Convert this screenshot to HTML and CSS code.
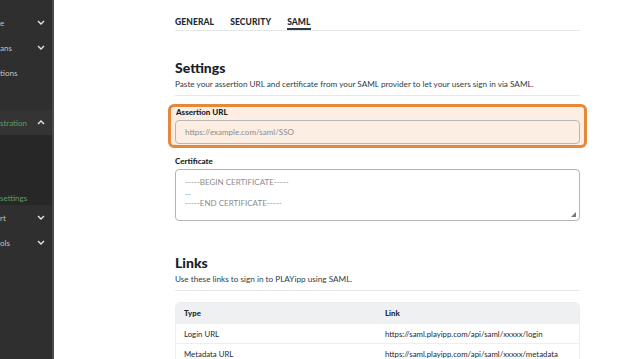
FILE: index.html
```html
<!DOCTYPE html>
<html>
<head>
<meta charset="utf-8">
<link rel="stylesheet" href="styles.css">
</head>
<body>
<div class="app">
  <nav class="sidebar">
    <div class="nav-item"><span>e</span><svg class="chev" viewBox="0 0 8 5"><path d="M1 1l3 3 3-3"/></svg></div>
    <div class="nav-item"><span>ans</span><svg class="chev" viewBox="0 0 8 5"><path d="M1 1l3 3 3-3"/></svg></div>
    <div class="nav-item"><span>tions</span></div>
    <div class="nav-item"></div>
    <div class="nav-item open"><span class="green">stration</span><svg class="chev" viewBox="0 0 8 5"><path d="M1 4l3-3 3 3"/></svg></div>
    <div class="submenu">
      <div class="sub-item"></div>
      <div class="sub-item"></div>
      <div class="sub-item"></div>
      <div class="sub-item"></div>
      <div class="sub-item"><span class="green">settings</span></div>
    </div>
    <div class="nav-item"><span>rt</span><svg class="chev" viewBox="0 0 8 5"><path d="M1 1l3 3 3-3"/></svg></div>
    <div class="nav-item"><span>ols</span><svg class="chev" viewBox="0 0 8 5"><path d="M1 1l3 3 3-3"/></svg></div>
  </nav>
  <main class="main">
    <div class="content">
      <div class="tabs">
        <span class="tab">GENERAL</span>
        <span class="tab">SECURITY</span>
        <span class="tab active">SAML</span>
      </div>
      <section class="section">
        <h2>Settings</h2>
        <p class="desc">Paste your assertion URL and certificate from your SAML provider to let your users sign in via SAML.</p>
        <hr class="divider">
        <div class="field highlight">
          <label>Assertion URL</label>
          <div class="input">https://example.com/saml/SSO</div>
        </div>
        <div class="field">
          <label>Certificate</label>
          <div class="textarea">
            <div>-----BEGIN CERTIFICATE-----</div>
            <div>...</div>
            <div>-----END CERTIFICATE-----</div>
            <svg class="grip" viewBox="0 0 6 6"><path d="M6 0L6 6L0 6Z"/></svg>
          </div>
        </div>
      </section>
      <section class="section links">
        <h2>Links</h2>
        <p class="desc">Use these links to sign in to PLAYipp using SAML.</p>
        <hr class="divider">
        <div class="table">
          <div class="row head"><span>Type</span><span>Link</span></div>
          <div class="row"><span>Login URL</span><span>https://saml.playipp.com/api/saml/xxxxx/login</span></div>
          <div class="row"><span>Metadata URL</span><span>https://saml.playipp.com/api/saml/xxxxx/metadata</span></div>
        </div>
      </section>
    </div>
  </main>
</div>
</body>
</html>
```
FILE: styles.css
```css
* { box-sizing: border-box; }
html, body { margin: 0; padding: 0; }
body {
  width: 644px;
  height: 359px;
  overflow: hidden;
  background: #fff;
  font-family: Lato, "Noto Sans", sans-serif;
  color: #1d2a33;
}
.app { display: flex; height: 359px; overflow: hidden; }
.sidebar {
  width: 54px;
  flex: none;
  background: #2f2f2f;
  border-right: 2px solid #4b4b4b;
  padding-top: 10px;
  color: #c4c4c4;
  font-size: 8px;
}
.nav-item {
  height: 25px;
  display: flex;
  align-items: center;
  justify-content: space-between;
  padding-right: 7px;
}
.nav-item.open { background: #343434; }
.chev { width: 8px; height: 5px; fill: none; stroke: #e6e6e6; stroke-width: 1.4; margin-left: auto; }
.submenu { background: #272727; height: 70px; display: flex; flex-direction: column; }
.sub-item { height: 14px; display: flex; align-items: center; }
.green { color: #5f9e63; }
.main { flex: 1; padding-left: 121px; }
.content { width: 405px; }
.tabs {
  display: flex;
  gap: 16px;
  border-bottom: 1px solid #e4e7ea;
  padding-top: 17px;
  height: 31px;
}
.tab {
  font-size: 8.5px;
  font-weight: 900;
  letter-spacing: 0.1px;
  color: #1d2a33;
  height: 13px;
  line-height: 10px;
}
.tab.active { border-bottom: 2px solid #2b3a45; }
h2 {
  margin: 0;
  font-size: 14px;
  font-weight: 900;
  line-height: 18px;
  color: #16222b;
}
.section { padding-top: 28px; }
.desc {
  margin: 0;
  font-size: 8.2px;
  line-height: 14px;
  color: #2f3d47;
}
.divider { border: none; border-top: 1.5px solid #e6e8ea; margin: 4px 0 0; }
.field { display: flex; flex-direction: column; }
.field label { font-size: 8px; font-weight: 900; line-height: 10px; color: #16222b; }
.highlight {
  margin: 8px -7px 0;
  padding: 0 4px 1px;
  border: 3px solid #e7873a;
  border-radius: 6px;
  background: #fdeee3;
}
.highlight label { padding-left: 1px; }
.input {
  margin-top: 3px;
  height: 24px;
  border: 1px solid #b9b6b3;
  border-radius: 4px;
  padding-left: 9px;
  display: flex;
  align-items: center;
  font-size: 8px;
  color: #8a8c8e;
}
.field + .field { margin-top: 8px; }
.field + .field label { line-height: 11px; }
.textarea {
  position: relative;
  margin-top: 2px;
  height: 52px;
  border: 1px solid #b3b3b3;
  border-radius: 4px;
  padding: 7px 9px;
  font-size: 8px;
  line-height: 10.3px;
  color: #8a8c8e;
}
.grip { position: absolute; right: 3px; bottom: 3px; width: 5px; height: 5px; fill: #777; }
.links { padding-top: 33px; }
.table {
  margin-top: 11px;
  border: 1px solid #eceeef;
  border-radius: 5px;
  overflow: hidden;
}
.row {
  display: grid;
  grid-template-columns: 201px 1fr;
  height: 20px;
  align-items: center;
  padding-left: 8px;
  font-size: 7.8px;
  line-height: 10px;
  color: #1d2a33;
  border-top: 1px solid #eceeef;
}
.row.head { background: #eef0f1; border-top: none; font-weight: 900; height: 20px; }
```
